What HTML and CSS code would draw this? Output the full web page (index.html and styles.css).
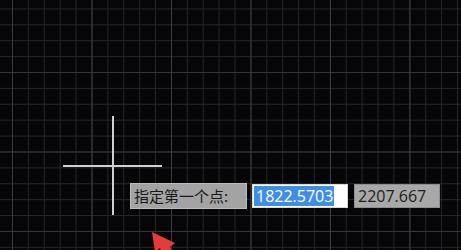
FILE: index.html
```html
<!DOCTYPE html>
<html lang="zh-CN">
<head>
<meta charset="utf-8">
<title>CAD 动态输入</title>
<link rel="stylesheet" href="styles.css">
</head>
<body>
<div class="canvas">
  <div class="cross-v"></div>
  <div class="cross-h"></div>
  <div class="dyn-input">
    <div class="prompt">指定第一个点:</div>
    <div class="field field-active"><span class="sel">1822.5703</span></div>
    <div class="field field-idle">2207.667</div>
  </div>
  <svg class="pointer" width="40" height="30" viewBox="0 0 40 30">
    <polygon points="2,2 5,22 10,18 14,30 26,30 20,17 25,13" fill="#e63b3b"/>
  </svg>
</div>
</body>
</html>
```
FILE: styles.css
```css
html, body {
  margin: 0;
  padding: 0;
  background: #060608;
}
.canvas {
  position: relative;
  width: 461px;
  height: 250px;
  overflow: hidden;
  background-color: #060608;
  background-image:
    linear-gradient(to right, #3a3b40 1px, transparent 1px),
    linear-gradient(to bottom, #34353a 1px, transparent 1px),
    linear-gradient(to right, #25262b 1px, transparent 1px),
    linear-gradient(to bottom, #25262b 1px, transparent 1px);
  background-size: 79.5px 79.5px, 79.5px 79.5px, 15.9px 15.9px, 15.9px 15.9px;
  background-position: 12px 0, 0 72px, 12px 0, 0 72px;
}
.cross-v {
  position: absolute;
  left: 112px;
  top: 116px;
  width: 2px;
  height: 99px;
  background: #cfcfcf;
}
.cross-h {
  position: absolute;
  left: 63px;
  top: 165px;
  width: 99px;
  height: 2px;
  background: #cfcfcf;
}
.dyn-input {
  position: absolute;
  left: 130px;
  top: 183px;
  display: flex;
  align-items: center;
  gap: 5px;
  font-family: "Open Sans", "Noto Sans CJK SC", sans-serif;
}
.prompt {
  box-sizing: border-box;
  width: 117px;
  height: 26px;
  padding: 0 0 0 3px;
  background: #a3a3a3;
  border: 1px solid #bdbdbd;
  color: #181818;
  font-family: "Noto Sans CJK SC", sans-serif;
  font-size: 15px;
  line-height: 24px;
  white-space: nowrap;
}
.field {
  box-sizing: border-box;
  height: 24px;
  font-size: 16px;
  line-height: 22px;
  white-space: nowrap;
}
.field-active {
  width: 96px;
  background: #ffffff;
  border: 1px solid #d8d8d8;
  padding: 0 0 0 1px;
}
.sel {
  display: inline-block;
  background: #3f8ee6;
  color: #ffffff;
  line-height: 20px;
  padding: 0 1px 0 2px;
  margin-top: 1px;
}
.field-idle {
  width: 86px;
  margin-left: 1px;
  background: #a8a8a8;
  border: 1px solid #8f8f8f;
  color: #202020;
  padding: 0 0 0 3px;
}
.pointer {
  position: absolute;
  left: 150px;
  top: 230px;
  filter: blur(0.6px);
}
```
